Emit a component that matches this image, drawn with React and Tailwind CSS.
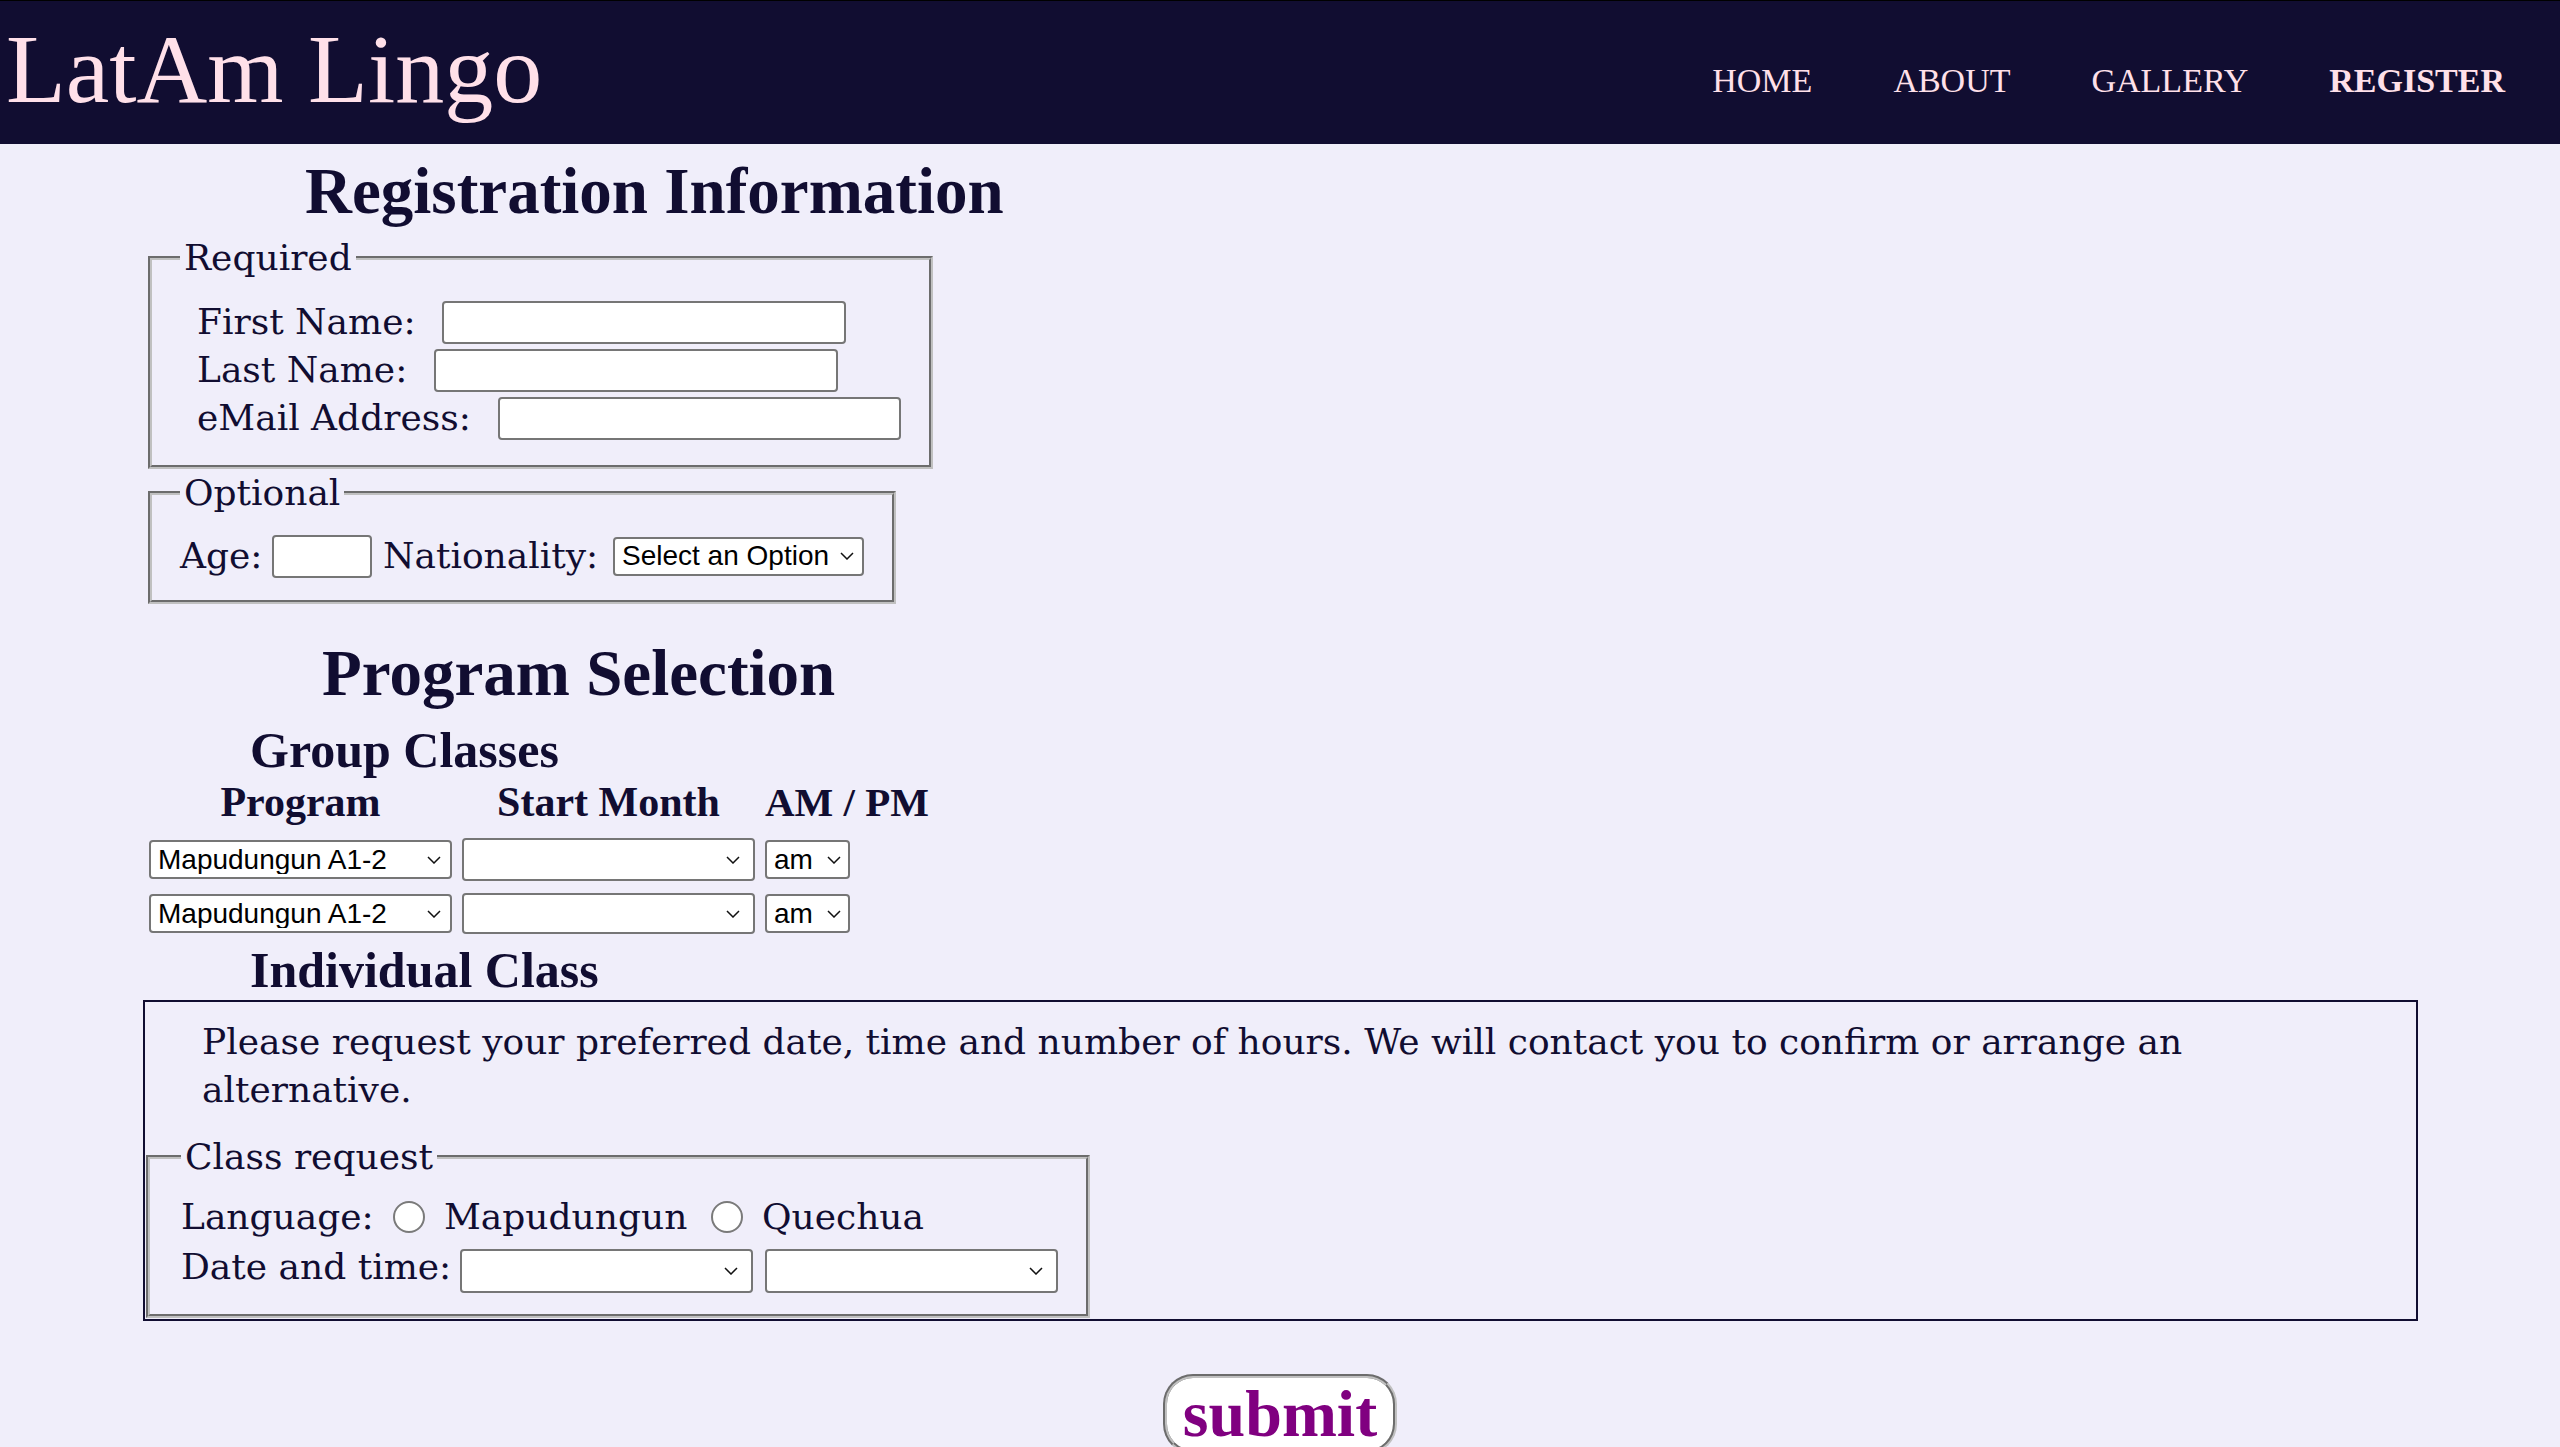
import React from "react";

function Chevron({ className }) {
  return (
    <svg
      className={"pointer-events-none absolute bottom-0 top-0 my-auto h-[8px] w-[14px] " + className}
      viewBox="0 0 14 8"
      fill="none"
      stroke="#111"
      strokeWidth="1.5"
    >
      <path d="M1 1 L7 7 L13 1" />
    </svg>
  );
}

function Select({ className, text, chev = "right-[11px]" }) {
  return (
    <div className={"relative shrink-0 " + className}>
      <select className="block h-full w-full appearance-none rounded-[4px] border-2 border-[#767676] bg-white pl-[7px] pr-[28px] font-['Liberation_Sans',Arial,sans-serif] text-[28px] leading-none text-black">
        <option>{text}</option>
      </select>
      <Chevron className={chev} />
    </div>
  );
}

function TextInput({ className }) {
  return (
    <input
      type="text"
      className={"block h-[43px] shrink-0 rounded-[4px] border-2 border-[#767676] bg-white " + className}
    />
  );
}

function Radio() {
  return (
    <input
      type="radio"
      name="lang"
      className="block h-[32px] w-[32px] shrink-0 appearance-none rounded-full border-2 border-[#7a7a7a] bg-white"
    />
  );
}

export default function App() {
  return (
    <div className="min-h-screen bg-[#f0eefa] font-['DejaVu_Serif',serif] text-[36px] leading-[48px] text-[#110d31]">
      <header className="flex h-[144px] items-start justify-between border-t border-black bg-[#110d31] font-['Liberation_Serif',serif] text-[#ffe0e9]">
        <div className="pl-[6px] pt-[19px] text-[98px] leading-[98px]">LatAm Lingo</div>
        <nav className="flex gap-[81px] pr-[55px] pt-[60px] text-[34px] leading-[40px]">
          <a href="#home">HOME</a>
          <a href="#about">ABOUT</a>
          <a href="#gallery">GALLERY</a>
          <a href="#register" className="font-bold">REGISTER</a>
        </nav>
      </header>

      <main className="pb-[40px] pl-[143px]">
        <h1 className="ml-[162px] mt-[12px] font-['Liberation_Serif',serif] text-[65px] font-bold leading-[70px]">
          Registration Information
        </h1>

        <fieldset className="ml-[5px] mt-[8px] w-[784px] border-4 border-[#c0c0c0] px-[28px] pb-[23px] [border-style:groove]">
          <legend className="px-[4px]">Required</legend>
          <div className="ml-[17px] mt-[16px]">
            <div className="flex h-[48px] items-center">
              <span className="w-[245px] shrink-0">First Name:</span>
              <TextInput className="w-[404px]" />
            </div>
            <div className="flex h-[48px] items-center">
              <span className="w-[237px] shrink-0">Last Name:</span>
              <TextInput className="w-[404px]" />
            </div>
            <div className="flex h-[48px] items-center">
              <span className="w-[301px] shrink-0">eMail Address:</span>
              <TextInput className="w-[403px]" />
            </div>
          </div>
        </fieldset>

        <fieldset className="ml-[5px] w-[747px] border-4 border-[#c0c0c0] px-[28px] pb-[20px] [border-style:groove]">
          <legend className="px-[4px]">Optional</legend>
          <div className="mt-[15px] flex h-[48px] items-center">
            <span className="w-[92px] shrink-0">Age:</span>
            <TextInput className="w-[100px]" />
            <span className="ml-[11px] w-[230px] shrink-0">Nationality:</span>
            <Select className="h-[39px] w-[251px]" text="Select an Option" chev="right-[10px]" />
          </div>
        </fieldset>

        <h1 className="ml-[179px] mt-[34px] font-['Liberation_Serif',serif] text-[65px] font-bold leading-[70px]">
          Program Selection
        </h1>
        <h2 className="ml-[107px] mt-[14px] font-['Liberation_Serif',serif] text-[50px] font-bold leading-[56px]">
          Group Classes
        </h2>

        <div className="ml-[6px] grid grid-cols-[303px_293px_160px] grid-rows-[48px_41px_41px] gap-x-[10px] gap-y-[13px]">
          <div className="whitespace-nowrap text-center font-['Liberation_Serif',serif] text-[42px] font-bold leading-[48px]">Program</div>
          <div className="whitespace-nowrap text-center font-['Liberation_Serif',serif] text-[42px] font-bold leading-[48px]">Start Month</div>
          <div className="whitespace-nowrap text-center font-['Liberation_Serif',serif] text-[41px] font-bold leading-[48px]">AM / PM</div>

          <Select className="h-[39px] w-[303px] self-center" text="Mapudungun A1-2" chev="right-[11px]" />
          <Select className="h-[43px] w-[293px] self-center" text="" chev="right-[15px]" />
          <Select className="h-[39px] w-[85px] self-center" text="am" chev="right-[9px]" />

          <Select className="h-[39px] w-[303px] self-center" text="Mapudungun A1-2" chev="right-[11px]" />
          <Select className="h-[41px] w-[293px] self-center" text="" chev="right-[15px]" />
          <Select className="h-[39px] w-[85px] self-center" text="am" chev="right-[9px]" />
        </div>

        <h2 className="ml-[107px] mt-[8px] font-['Liberation_Serif',serif] text-[50px] font-bold leading-[56px]">
          Individual Class
        </h2>

        <div className="mt-[2px] w-[2275px] border-2 border-[#110d31] pb-[1px]">
          <p className="mb-[19px] mt-[16px] pl-[57px] pr-[150px]">
            Please request your preferred date, time and number of hours. We will contact you to confirm or arrange an alternative.
          </p>
          <fieldset className="ml-[1px] w-[944px] border-4 border-[#c0c0c0] pb-[23px] pl-[31px] pr-[28px] [border-style:groove]">
            <legend className="px-[4px]">Class request</legend>
            <div className="mt-[12px] flex h-[48px] items-center">
              <span className="w-[212px] shrink-0">Language:</span>
              <Radio />
              <span className="ml-[19px] w-[267px] shrink-0">Mapudungun</span>
              <Radio />
              <span className="ml-[19px]">Quechua</span>
            </div>
            <div className="mt-[2px] flex h-[48px] items-center">
              <span className="w-[279px] shrink-0">Date and time:</span>
              <Select className="mt-[8px] h-[44px] w-[293px]" text="" chev="right-[15px]" />
              <Select className="ml-[12px] mt-[8px] h-[44px] w-[293px]" text="" chev="right-[15px]" />
            </div>
          </fieldset>
        </div>

        <div className="-ml-[143px] mt-[53px] flex justify-center">
          <button
            type="submit"
            className="rounded-[30px] border-4 border-[#c0c0c0] bg-white px-[16px] font-['Liberation_Serif',serif] text-[66px] font-bold leading-[72px] text-[#800080] [border-style:groove]"
          >
            submit
          </button>
        </div>
      </main>
    </div>
  );
}
